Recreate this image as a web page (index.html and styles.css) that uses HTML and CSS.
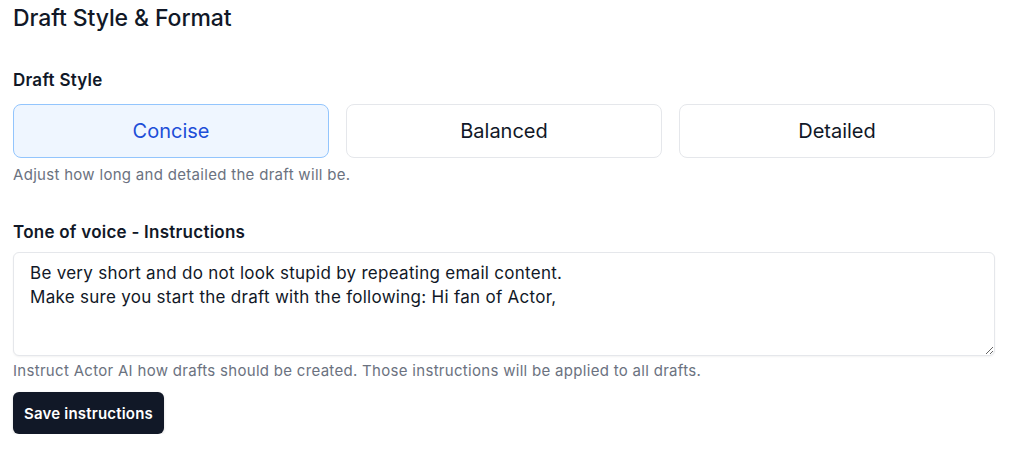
FILE: index.html
```html
<!DOCTYPE html>
<html>
<head>
<meta charset="utf-8">
<link rel="stylesheet" href="styles.css">
</head>
<body>
<div class="page">
  <h2 class="title">Draft Style &amp; Format</h2>
  <section class="group">
    <div class="label">Draft Style</div>
    <div class="options">
      <button class="option active">Concise</button>
      <button class="option">Balanced</button>
      <button class="option">Detailed</button>
    </div>
    <p class="help">Adjust how long and detailed the draft will be.</p>
  </section>
  <section class="group tone">
    <div class="label">Tone of voice - Instructions</div>
    <textarea class="input">Be very short and do not look stupid by repeating email content.
Make sure you start the draft with the following: Hi fan of Actor,</textarea>
    <p class="help help2">Instruct Actor AI how drafts should be created. Those instructions will be applied to all drafts.</p>
    <button class="save">Save instructions</button>
  </section>
</div>
</body>
</html>
```
FILE: styles.css
```css
* { box-sizing: border-box; }
html, body { margin: 0; background: #fff; }
body { font-family: Inter, "Noto Sans", sans-serif; color: #111827; }
.page { padding: 4px 29px 0 13px; }
.title { margin: 0; font-size: 23px; line-height: 28px; font-weight: 500; letter-spacing: -0.1px; }
.group { margin-top: 36px; }
.label { font-size: 17px; line-height: 24px; font-weight: 600; letter-spacing: 0.25px; }
.options { margin-top: 12px; display: grid; grid-template-columns: 1fr 1fr 1fr; gap: 17px; }
.option {
  height: 54px; border: 1px solid #e5e7eb; border-radius: 8px; background: #fff;
  font-family: inherit; font-size: 20px; color: #111827; font-weight: 400;
}
.option.active { background: #eff6ff; border-color: #93c5fd; color: #1d4ed8; }
.help { margin: 7px 0 0; font-size: 15px; line-height: 20px; color: #6b7280; letter-spacing: 0.3px; }
.tone { margin-top: 35px; }
.input {
  display: block; width: 100%; height: 104px; margin-top: 8px;
  border: 1px solid #e5e7eb; border-radius: 6px; padding: 8px 16px;
  font-family: inherit; font-size: 17px; line-height: 24px; color: #111827; letter-spacing: 0.28px;
  box-shadow: 0 1px 2px rgba(0,0,0,0.05); resize: vertical;
}
.help2 { margin-top: 5px; }
.save {
  margin-top: 11px; height: 42px; padding: 0 11px; border: 0; border-radius: 6px;
  background: #111827; color: #fff; font-family: inherit; font-size: 15px; font-weight: 600; letter-spacing: 0.2px;
  box-shadow: 0 1px 3px rgba(0,0,0,0.15);
}
```
